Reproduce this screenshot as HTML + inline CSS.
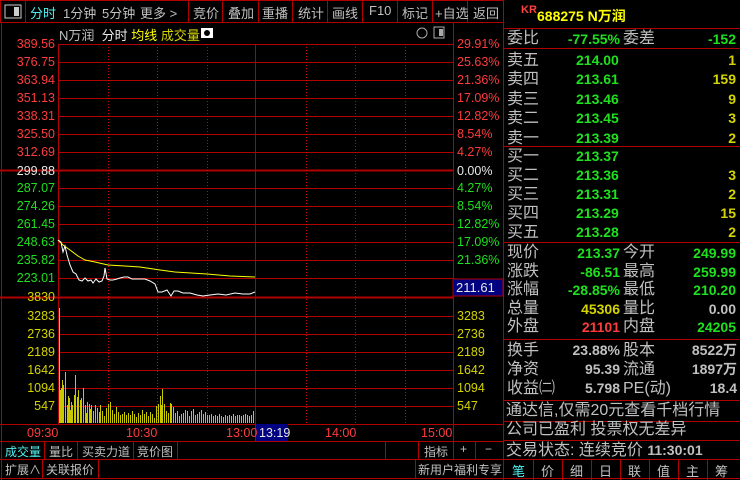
<!DOCTYPE html><html><head><meta charset="utf-8"><style>
*{margin:0;padding:0;box-sizing:border-box}
body{width:740px;height:480px;background:#000;overflow:hidden;position:relative;font-family:"Liberation Sans","Noto Sans CJK SC",sans-serif;color:#c0c0c0}
.a{position:absolute;white-space:nowrap}
.tb{font-size:13px;top:3px}
.l{font-size:12.5px;right:685px;text-align:right;line-height:14px}
.r{font-size:12.5px;left:457px;line-height:14px}
.rp{font-size:16px;line-height:18px}
.n{font-size:14px;font-weight:bold;line-height:18px}
.g{color:#1ee01e}.rd{color:#ff3c3c}.y{color:#d4d400}.w{color:#e8e8e8}.c{color:#50f0f0}
</style></head><body>
<svg class="a" style="left:0;top:0" width="740" height="480">
<g stroke="#b00000" stroke-width="1" fill="none">
<rect x="0.5" y="0.5" width="503" height="22"/>
<path d="M25.5 1V22M188.5 1V22M222.5 1V22M258.5 1V22M292.5 1V22M327.5 1V22M362.5 1V22M397.5 1V22M432.5 1V22M467.5 1V22"/>
<path d="M58.5 44V424M255.5 44V441M453.5 23V459M503.5 0V480M1.5 23V480"/>
<path d="M58 44.5H453M58 62.5H453M58 80.5H453M58 98.5H453M58 116.5H453M58 134.5H453M58 152.5H453M58 188.5H453M58 206.5H453M58 224.5H453M58 242.5H453M58 260.5H453M58 278.5H453M58 316.5H453M58 334.5H453M58 352.5H453M58 370.5H453M58 388.5H453M58 406.5H453"/>
<path d="M0 170.5H453M0 297.5H453" stroke-width="2"/>
<path d="M0 424.5H503M0 441.5H503M0 459.5H740M0 478.5H740"/>
<path d="M44.5 441V459M77.5 441V459M133.5 441V459M177.5 441V459M42.5 459V478M98.5 459V478M415.5 459V478M385.5 441V459M418.5 441V459M453.5 441V459M475.5 441V459"/>
<path d="M504 28.5H740M504 48.5H740M504 146.5H740M504 242.5H740M504 339.5H740M504 400.5H740M504 421.5H740M504 440.5H740"/>
<path d="M533.5 459V480M562.5 459V480M591.5 459V480M620.5 459V480M649.5 459V480M678.5 459V480M707.5 459V480"/>
</g>
<g stroke="#d00000" stroke-dasharray="1 2" fill="none"><path d="M108.5 44V424M157.5 44V424M207.5 44V424M306.5 44V424M355.5 44V424M405.5 44V424"/></g>
<rect x="5" y="5" width="16" height="13" fill="none" stroke="#ccc"/><rect x="14" y="7" width="5" height="9" fill="#ccc"/>
<rect x="201" y="28" width="12" height="10" fill="#fff"/><circle cx="207" cy="33" r="3" fill="#000"/>
<circle cx="422" cy="33" r="5" fill="none" stroke="#aaa"/><rect x="434" y="27" width="10" height="11" fill="none" stroke="#aaa"/><rect x="439" y="29" width="4" height="7" fill="#aaa"/>
<polyline fill="none" stroke="#ffff00" stroke-width="1" points="58,240 63,245 70,250 78,256 85,260 95,262 108,265 125,266 140,267 160,270 175,272 207,274 230,276 255,277"/>
<polyline fill="none" stroke="#fff" stroke-width="1" points="58,240 61,242 63,252 65,246 67,255 70,265 73,272 76,274 79,280 82,281 85,278 88,281 91,280 93,283 96,279 99,282 102,281 104,276 105,268 107,279 110,280 113,280 117,279 120,278 124,277 128,277 132,279 140,279 145,279 150,281 155,284 158,292 162,292 167,290 171,296 174,291 178,291 183,293 190,293 197,295 203,296 210,295 218,294 226,295 235,293 243,294 250,294 255,292"/>
<path stroke="#c8c800" stroke-width="1" fill="none" d="M59.5 423V308M60.5 423V390M61.5 423V388M62.5 423V380M63.5 423V385M65.5 423V372M67.5 423V405M68.5 423V396M69.5 423V398M70.5 423V410M71.5 423V402M72.5 423V405M74.5 423V395M75.5 423V375M77.5 423V397M78.5 423V390M80.5 423V400M81.5 423V398M83.5 423V388M85.5 423V405M86.5 423V413M87.5 423V402M89.5 423V404M90.5 423V409M91.5 423V405M93.5 423V411M95.5 423V405M97.5 423V408M99.5 423V412M100.5 423V405M102.5 423V411M104.5 423V416M106.5 423V408M108.5 423V404M110.5 423V402M112.5 423V410M114.5 423V414M116.5 423V407M118.5 423V412M120.5 423V415M122.5 423V414M124.5 423V412M126.5 423V415M128.5 423V413M130.5 423V415M132.5 423V411M134.5 423V414M136.5 423V417M138.5 423V413M140.5 423V415M142.5 423V410M144.5 423V414M146.5 423V412M148.5 423V416M150.5 423V412M152.5 423V414M154.5 423V418M156.5 423V406M158.5 423V404M160.5 423V396M161.5 423V405M162.5 423V389M164.5 423V404M166.5 423V411M168.5 423V413M170.5 423V403M171.5 423V404M173.5 423V407M175.5 423V413M177.5 423V411M179.5 423V416M181.5 423V414M183.5 423V413M185.5 423V410M187.5 423V411M189.5 423V416M191.5 423V411M193.5 423V409M195.5 423V415M197.5 423V414M199.5 423V412M201.5 423V410M203.5 423V414M205.5 423V412M207.5 423V415M209.5 423V415M211.5 423V414M213.5 423V416M215.5 423V415M217.5 423V416M219.5 423V414M221.5 423V416M223.5 423V417M225.5 423V415M227.5 423V416M229.5 423V415M231.5 423V416M233.5 423V414M235.5 423V416M237.5 423V415M239.5 423V415M241.5 423V416M243.5 423V415M245.5 423V414M247.5 423V415M249.5 423V416M251.5 423V415M253.5 423V411"/>
<rect x="453" y="279" width="50" height="17" fill="#000080" stroke="#b00000"/>
<rect x="256" y="424" width="32" height="17" fill="#000080"/>
</svg>
<div class="a tb c" style="left:30px">分时</div>
<div class="a tb" style="left:63px">1分钟</div>
<div class="a tb" style="left:102px">5分钟</div>
<div class="a tb" style="left:140px">更多 &gt;</div>
<div class="a tb" style="left:193px">竞价</div>
<div class="a tb" style="left:228px">叠加</div>
<div class="a tb" style="left:262px">重播</div>
<div class="a tb" style="left:298px">统计</div>
<div class="a tb" style="left:332px">画线</div>
<div class="a tb" style="left:369px">F10</div>
<div class="a tb" style="left:402px">标记</div>
<div class="a tb" style="left:435px">+自选</div>
<div class="a tb" style="left:473px">返回</div>
<div class="a" style="left:59px;top:25px;font-size:13px">N万润 <span class="w">&nbsp;分时</span> <span style="color:#ff0">均线</span> <span class="y">成交量</span></div>
<div class="a l rd" style="top:37px">389.56</div><div class="a l rd" style="top:55px">376.75</div><div class="a l rd" style="top:73px">363.94</div><div class="a l rd" style="top:91px">351.13</div><div class="a l rd" style="top:109px">338.31</div><div class="a l rd" style="top:127px">325.50</div><div class="a l rd" style="top:145px">312.69</div><div class="a l w" style="top:164px">299.88</div><div class="a l g" style="top:181px">287.07</div><div class="a l g" style="top:199px">274.26</div><div class="a l g" style="top:217px">261.45</div><div class="a l g" style="top:235px">248.63</div><div class="a l g" style="top:253px">235.82</div><div class="a l g" style="top:271px">223.01</div>
<div class="a l y" style="top:290px">3830</div><div class="a l y" style="top:309px">3283</div><div class="a l y" style="top:327px">2736</div><div class="a l y" style="top:345px">2189</div><div class="a l y" style="top:363px">1642</div><div class="a l y" style="top:381px">1094</div><div class="a l y" style="top:399px">547</div>
<div class="a r rd" style="top:37px">29.91%</div><div class="a r rd" style="top:55px">25.63%</div><div class="a r rd" style="top:73px">21.36%</div><div class="a r rd" style="top:91px">17.09%</div><div class="a r rd" style="top:109px">12.82%</div><div class="a r rd" style="top:127px">8.54%</div><div class="a r rd" style="top:145px">4.27%</div><div class="a r w" style="top:164px">0.00%</div><div class="a r g" style="top:181px">4.27%</div><div class="a r g" style="top:199px">8.54%</div><div class="a r g" style="top:217px">12.82%</div><div class="a r g" style="top:235px">17.09%</div><div class="a r g" style="top:253px">21.36%</div>
<div class="a r w" style="top:281px;left:456px;font-size:13px">211.61</div>
<div class="a r y" style="top:309px">3283</div><div class="a r y" style="top:327px">2736</div><div class="a r y" style="top:345px">2189</div><div class="a r y" style="top:363px">1642</div><div class="a r y" style="top:381px">1094</div><div class="a r y" style="top:399px">547</div>
<div class="a rd" style="left:27px;top:426px;font-size:12.5px">09:30</div><div class="a rd" style="left:126px;top:426px;font-size:12.5px">10:30</div><div class="a rd" style="left:226px;top:426px;font-size:12.5px">13:00</div><div class="a w" style="left:259px;top:426px;font-size:12.5px">13:19</div><div class="a rd" style="left:325px;top:426px;font-size:12.5px">14:00</div><div class="a rd" style="left:421px;top:426px;font-size:12.5px">15:00</div>
<div class="a c" style="left:5px;top:443px;font-size:12px">成交量</div><div class="a" style="left:49px;top:443px;font-size:12px">量比</div><div class="a" style="left:82px;top:443px;font-size:12px">买卖力道</div><div class="a" style="left:137px;top:443px;font-size:12px">竞价图</div>
<div class="a" style="left:424px;top:443px;font-size:12px">指标</div><div class="a" style="left:460px;top:442px;font-size:12px">+</div><div class="a" style="left:485px;top:442px;font-size:12px">−</div>
<div class="a" style="left:5px;top:461px;font-size:12px">扩展∧</div><div class="a" style="left:46px;top:461px;font-size:12px">关联报价</div><div class="a" style="left:418px;top:461px;font-size:12px">新用户福利专享</div>
<div class="a" style="left:521px;top:4px;font-size:11px;color:#ff4040;font-weight:bold">KR</div>
<div class="a" style="left:537px;top:6px;font-size:14px;color:#ffff00;font-weight:bold">688275 N万润</div>
<div class="a rp" style="left:507px;top:30px">委比</div><div class="a n g" style="right:120px;top:30px">-77.55%</div><div class="a rp" style="left:623px;top:30px">委差</div><div class="a n g" style="right:4px;top:30px">-152</div>
<div class="a rp" style="left:507px;top:51px;line-height:19.4px">卖五<br>卖四<br>卖三<br>卖二<br>卖一</div>
<div class="a n g" style="left:576px;top:51px;line-height:19.4px">214.00<br>213.61<br>213.46<br>213.45<br>213.39</div>
<div class="a n y" style="right:4px;top:51px;line-height:19.4px;text-align:right">1<br>159<br>9<br>3<br>2</div>
<div class="a rp" style="left:507px;top:147px;line-height:19px">买一<br>买二<br>买三<br>买四<br>买五</div>
<div class="a n g" style="left:576px;top:147px;line-height:19px">213.37<br>213.36<br>213.31<br>213.29<br>213.28</div>
<div class="a n y" style="right:4px;top:147px;line-height:19px;text-align:right">&nbsp;<br>3<br>2<br>15<br>2</div>
<div class="a rp" style="left:507px;top:244px;line-height:18.6px">现价<br>涨跌<br>涨幅<br>总量<br>外盘</div>
<div class="a n" style="right:120px;top:244px;line-height:18.6px;text-align:right"><span class="g">213.37</span><br><span class="g">-86.51</span><br><span class="g">-28.85%</span><br><span class="y">45306</span><br><span class="rd">21101</span></div>
<div class="a rp" style="left:623px;top:244px;line-height:18.6px">今开<br>最高<br>最低<br>量比<br>内盘</div>
<div class="a n" style="right:4px;top:244px;line-height:18.6px;text-align:right"><span class="g">249.99</span><br><span class="g">259.99</span><br><span class="g">210.20</span><br><span>0.00</span><br><span class="g">24205</span></div>
<div class="a rp" style="left:507px;top:341px;line-height:19px">换手<br>净资<br>收益㈡</div>
<div class="a n" style="right:120px;top:341px;line-height:19px;text-align:right">23.88%<br>95.39<br>5.798</div>
<div class="a rp" style="left:623px;top:341px;line-height:19px">股本<br>流通<br>PE(动)</div>
<div class="a n" style="right:3px;top:341px;line-height:19px;text-align:right">8522万<br>1897万<br>18.4</div>
<div class="a rp" style="left:506px;top:402px">通达信,仅需20元查看千档行情</div>
<div class="a rp" style="left:506px;top:421px">公司已盈利 投票权无差异</div>
<div class="a rp" style="left:506px;top:441px">交易状态: 连续竞价 <b style="font-size:14px">11:30:01</b></div>
<div class="a c" style="left:512px;top:461px;font-size:13px">笔</div><div class="a" style="left:541px;top:461px;font-size:13px">价</div><div class="a" style="left:570px;top:461px;font-size:13px">细</div><div class="a" style="left:599px;top:461px;font-size:13px">日</div><div class="a" style="left:628px;top:461px;font-size:13px">联</div><div class="a" style="left:657px;top:461px;font-size:13px">值</div><div class="a" style="left:686px;top:461px;font-size:13px">主</div><div class="a" style="left:715px;top:461px;font-size:13px">筹</div>
</body></html>
